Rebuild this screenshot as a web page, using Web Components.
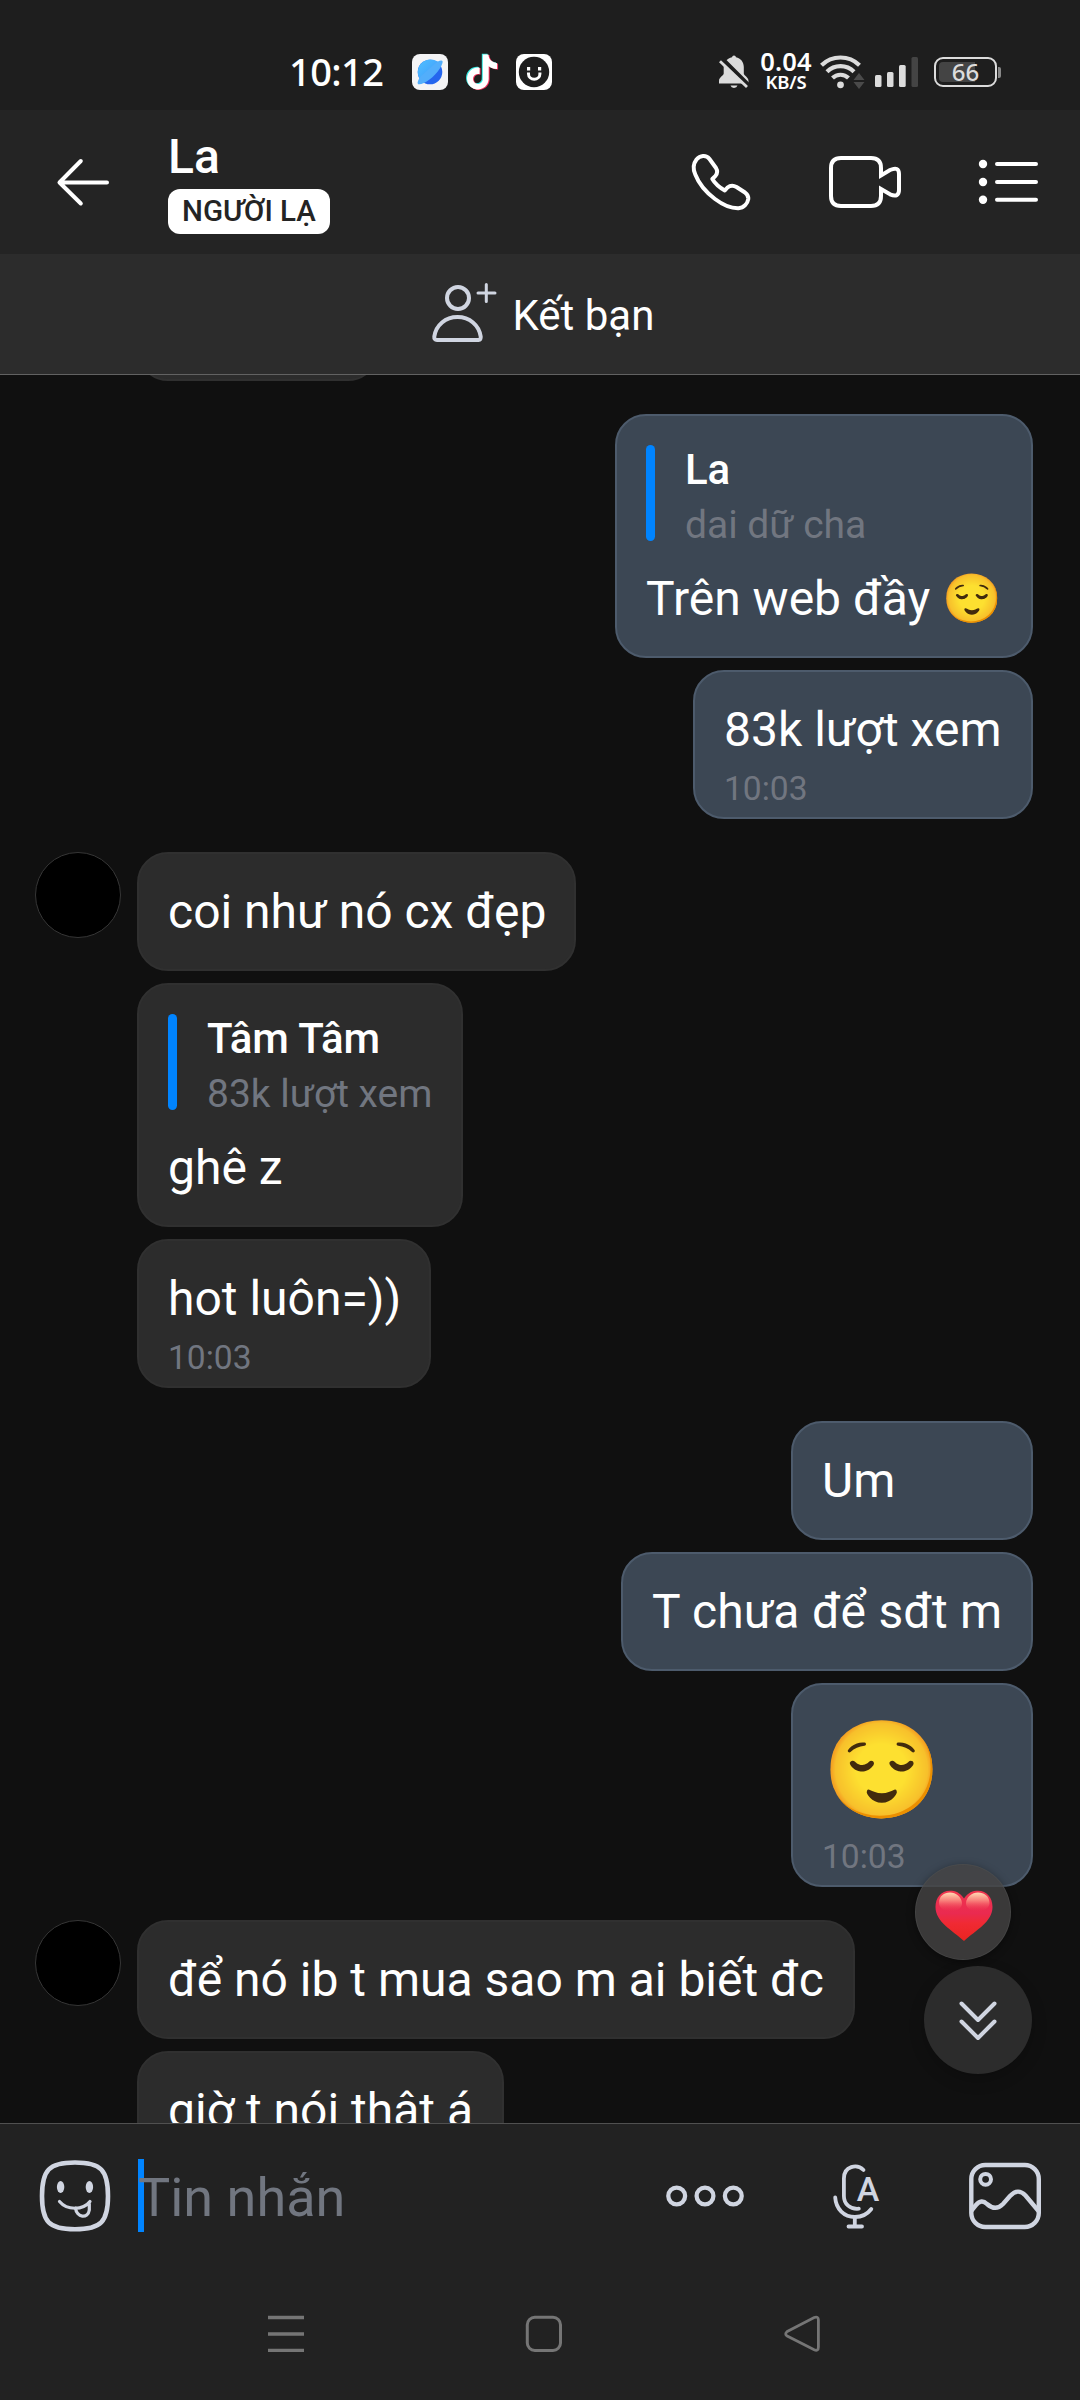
<!DOCTYPE html>
<html lang="vi">
<head>
<meta charset="utf-8">
<title>La</title>
<style>
html,body{margin:0;padding:0;background:#101010}
body{width:1080px;height:2400px;overflow:hidden;font-family:Roboto,"Noto Sans",sans-serif;color:#fff}
</style>
</head>
<body>
<chat-screen></chat-screen>
<script>
const note = 'M12.525.02c1.31-.02 2.61-.01 3.91-.02.08 1.53.63 3.09 1.75 4.17 1.12 1.11 2.7 1.62 4.24 1.79v4.03c-1.44-.05-2.89-.35-4.2-.97-.57-.26-1.1-.59-1.62-.93-.01 2.92.01 5.84-.02 8.75-.08 1.4-.54 2.79-1.35 3.94-1.31 1.92-3.58 3.17-5.91 3.21-1.43.08-2.86-.31-4.08-1.03-2.02-1.19-3.44-3.37-3.65-5.71-.02-.5-.03-1-.01-1.49.18-1.9 1.12-3.72 2.58-4.96 1.66-1.44 3.98-2.13 6.15-1.72.02 1.48-.04 2.96-.04 4.44-.99-.32-2.15-.23-3.02.37-.63.41-1.11 1.04-1.36 1.75-.21.51-.15 1.07-.14 1.61.24 1.64 1.82 3.02 3.5 2.87 1.12-.01 2.19-.66 2.77-1.61.19-.33.4-.67.41-1.06.1-1.79.06-3.57.07-5.36.01-4.03-.01-8.05.02-12.07z';

// name: [viewBox, markup]; icons are drawn at one unit per pixel
const ICONS = {
  planet: ['412 54 36 36', `<defs><linearGradient id="a" x1="0" y1="0" x2="1" y2="1"><stop offset="0" stop-color="#4fc0ff"/><stop offset="1" stop-color="#3f97fb"/></linearGradient></defs><rect x="412" y="54" width="36" height="36" rx="8" fill="#f4f4f5"/><circle cx="430" cy="72" r="12.3" fill="#2566ee"/><path d="M439.5 63.2A12.3 12.3 0 1 0 421.5 81Q433 76 439.5 63.2Z" fill="url(#a)"/><path d="M437 62Q444 58.5 442.3 63.5C440.500 70 431 80 424 83Q416 86.500 418 81Q419 78.500 421 76Z" fill="#52aefb"/>`],
  tiktok: ['464 53 36 38', `<g transform="translate(464.500 54) scale(1.44 1.46)"><path d="${note}" fill="#35e8e0" transform="translate(-.5 -.2)"/><path d="${note}" fill="#f5315b" transform="translate(.9 .7)"/><path d="${note}" fill="#fff" transform="translate(.2 .35)"/></g>`],
  smile: ['516 54 36 36', `<rect x="516" y="54" width="36" height="36" rx="8" fill="#fff"/><circle cx="534" cy="72" r="15.200" fill="#1e1e1e"/><path d="M528.5 72.500V74A5.700 5.300 0 0 0 539.900 74V72.500" stroke="#fff" stroke-width="3" fill="none"/><rect x="527" y="67" width="3.200" height="3.500" fill="#fff"/><rect x="538" y="67" width="3.200" height="3.500" fill="#fff"/>`],
  bell: ['718 54 32 36', `<path d="M734 55.500a2 2 0 0 1 2 1.700c4.600 1 7.800 4.600 7.800 9.800v6.500c0 2 4.700 3.500 4.700 7.500v2.500H719v-2.500c0-4 4.700-5.500 4.700-7.500V67c0-5.200 3.700-8.800 8.300-9.800a2 2 0 0 1 2-1.700Z" fill="#dcdcdc"/><path d="M730.500 85.500h7a3.600 3.200 0 0 1-7 0Z" fill="#dcdcdc"/><path d="M722.500 59L752 88.500" stroke="#1e1e1e" stroke-width="4"/><path d="M720 61.200L747 87" stroke="#dcdcdc" stroke-width="2.800"/>`],
  wifi: ['819 53 46 37', `<g fill="none" stroke="#dcdcdc" stroke-width="4.200"><path d="M821.500 65.200a27.300 27.300 0 0 1 38 0"/><path d="M827 71.800a19 19 0 0 1 27 0"/><path d="M832.500 78a11.500 11.500 0 0 1 16 0"/></g><circle cx="840.500" cy="84.800" r="3.400" fill="#dcdcdc"/><path d="M859 73l5.500 7h-11ZM859 89l5.500-7h-11Z" fill="#4a4a4a"/>`],
  signal: ['875 54 44 34', `<g fill="#dcdcdc"><rect x="875" y="75" width="6.500" height="12" rx="1.500"/><rect x="887" y="72" width="6.500" height="15" rx="1.500"/><rect x="899" y="65" width="6.700" height="22" rx="1.500"/></g><rect x="911.500" y="57" width="6.500" height="30" rx="1.500" fill="#444"/>`],
  back: ['54 157 58 50', `<path d="M107 182.500H59.500M80.800 161L59.500 182.500L80.800 203.500" stroke="#fff" stroke-width="4" stroke-linecap="round" stroke-linejoin="round" fill="none"/>`],
  phone: ['690 152 64 60', `<path d="M709.500 159C706 154.500 700 155.500 696.500 159.500C693 164 693.300 170 695.300 174.500C699 184 707 193 715 199C723 205 732 208.500 738.500 208.300C744 208 747.500 203.500 748.300 199C748.600 196 747.500 194.500 745 192.500L736.500 187C733 185 730 185.500 727.500 187.500L724.800 190.500C719.500 187.500 715 183.500 712.300 179L715.500 175.800C717.800 173 717.500 170.500 716 168Z" stroke="#fff" stroke-width="4" stroke-linejoin="round" fill="none"/>`],
  video: ['827 152 76 60', `<path d="M881 175.500V168Q881 158 871 158H841Q831 158 831 168V196Q831 206 841 206H871Q881 206 881 196V189L890 194.300Q899 198 899 190V174Q899 166 890 170Z" stroke="#fff" stroke-width="4" fill="none"/>`],
  list: ['977 152 63 60', `<g fill="#fff"><circle cx="983" cy="164" r="4.200"/><circle cx="983" cy="182" r="4.200"/><circle cx="983" cy="199.700" r="4.200"/></g><path d="M997 164H1036M997 182H1036M997 199.700H1036" stroke="#fff" stroke-width="4" stroke-linecap="round"/>`],
  addfriend: ['430 280 68 66', `<g fill="none" stroke="#d0d5e1" stroke-width="4" stroke-linejoin="round"><circle cx="458" cy="298" r="11"/><path d="M437 340H478.500Q481 340 480.700 336.500C479 325 469.500 317 457.500 317C445.500 317 436 325 434.300 336.500Q434 340 437 340Z"/><path d="M486.300 284.500V301.500M478 293H495" stroke-width="3" stroke-linecap="round"/></g>`],
  heart: ['934 1890 60 53', `<defs><linearGradient id="h" x1="0" y1="0" x2="0" y2="1"><stop offset="0" stop-color="#f0354f"/><stop offset=".45" stop-color="#ea2a50"/><stop offset=".65" stop-color="#f02a33"/><stop offset="1" stop-color="#ea2420"/></linearGradient><linearGradient id="s" x1="0" y1="0" x2="0" y2="1"><stop offset="0" stop-color="#ffdcb4"/><stop offset=".45" stop-color="#fb9083" stop-opacity=".8"/><stop offset="1" stop-color="#f03a50" stop-opacity="0"/></linearGradient></defs><path d="M964 1898.500C968 1892.500 973 1890.800 978 1890.800C987 1890.800 992.500 1898 992.500 1907C992.500 1922 976 1930 964 1941C952 1930 935.500 1922 935.500 1907C935.500 1898 941 1890.800 950 1890.800C955 1890.800 960 1892.500 964 1898.500Z" fill="url(#h)"/><path d="M939 1903C939 1896 944 1892.500 950 1892.500C956 1892.500 961.500 1897 962 1903C962.500 1914 939 1914 939 1903ZM966 1903C966.500 1897 972 1892.500 978 1892.500C984 1892.500 989.500 1896 989.500 1903C989.500 1914 965.500 1914 966 1903Z" fill="url(#s)"/>`],
  down: ['958 1998 40 46', `<path d="M961.500 2003.500L978 2020L994.500 2003.500M961.500 2021.500L978 2038L994.500 2021.500" stroke="#d0d5e1" stroke-width="4" stroke-linecap="round" stroke-linejoin="round" fill="none"/>`],
  sticker: ['39 2159 72 74', `<g fill="none" stroke="#d0d5e1" stroke-linecap="round"><path d="M75 2162.500C101 2162.500 108 2170 108 2196C108 2222 101 2229.300 75 2229.300C49 2229.300 42 2222 42 2196C42 2170 49 2162.500 75 2162.500Z" stroke-width="4.600"/><path d="M59.500 2201.500C67 2210.500 83 2210.500 90 2201.500" stroke-width="3.200"/><path d="M75.500 2208C76.500 2218 88 2219 89.300 2210V2204" stroke-width="3.200"/></g><ellipse cx="60.600" cy="2187" rx="3.700" ry="6" fill="#d0d5e1"/><ellipse cx="89.400" cy="2187" rx="3.700" ry="6" fill="#d0d5e1"/>`],
  more: ['665 2159 80 74', `<g fill="none" stroke="#d0d5e1" stroke-width="4.300"><circle cx="676.700" cy="2196" r="8.400"/><circle cx="705" cy="2196" r="8.400"/><circle cx="733.300" cy="2196" r="8.400"/></g>`],
  mic: ['831 2159 51 74', `<g fill="none" stroke="#d0d5e1" stroke-width="3.800" stroke-linecap="round" stroke-linejoin="round"><path d="M863.500 2170C857 2163.500 843.900 2166 843.900 2178.500V2196C843.900 2204 850 2209.500 858.800 2208.700"/><path d="M835.200 2197.500C836 2209 844 2217 855 2217C862 2217 867.500 2214 871.300 2209"/><path d="M854.800 2217V2226.500M848.500 2226.500H862"/></g><text x="868" y="2201.300" text-anchor="middle" font-family="Roboto" font-weight="500" font-size="34" fill="#d0d5e1">A</text>`],
  image: ['968 2159 74 74', `<g fill="none" stroke="#d0d5e1" stroke-width="4.400"><rect x="971.300" y="2165" width="67.500" height="62" rx="14"/><circle cx="985.600" cy="2179.300" r="5.400" stroke-width="4"/><path d="M971.500 2210.500L976 2205Q981.500 2198.500 987 2204Q995.500 2211.500 1003 2204L1010 2196Q1018 2187.500 1025.500 2195.500L1038.500 2211"/></g>`],
  recents: ['266 2312 40 44', `<path d="M268 2317.500H304M268 2334H304M268 2350.300H304" stroke="#757575" stroke-width="3.300"/>`],
  home: ['524 2312 40 44', `<rect x="527.300" y="2317.300" width="33.200" height="33.200" rx="7.500" fill="none" stroke="#757575" stroke-width="3"/>`],
  goback: ['781.300 2312 40 44', `<path d="M786.500 2331.500L813.500 2317.500Q817.700 2316 817.700 2320V2347Q817.700 2351.500 813.500 2349.800L786.500 2336Q783.500 2334 786.500 2331.500Z" fill="none" stroke="#757575" stroke-width="2.800"/>`]
};

class Part extends HTMLElement {
  constructor() {
    super();
    this.attachShadow({ mode: 'open' });
  }
  connectedCallback() {
    this.shadowRoot.innerHTML = this.view();
  }
}

customElements.define('ui-icon', class extends Part {
  view() {
    const [box, body] = ICONS[this.getAttribute('name')];
    const [, , w, h] = box.split(' ');
    return `<style>:host{display:block;flex:none}svg{display:block;overflow:visible}</style><svg width="${w}" height="${h}" viewBox="${box}">${body}</svg>`;
  }
});

customElements.define('status-bar', class extends Part {
  view() {
    return `<style>
:host{display:flex;align-items:flex-start;height:110px;box-sizing:border-box;padding:54px 79px 0 289px;background:#1e1e1e}
.t{font:500 38px/38px "Noto Sans",sans-serif;width:123px;margin-top:-2px;letter-spacing:-.6px;white-space:nowrap}
.n{width:60px;margin:-2px 3px 0 6px;text-align:center;white-space:nowrap}
.n b{display:block;font:600 25.500px/19px "Noto Sans",sans-serif;letter-spacing:.2px}
.n i{display:block;margin-top:2px;font:600 18.500px/17px "Noto Sans",sans-serif;letter-spacing:-.2px}
.g{flex:1}
ui-icon+ui-icon{margin-left:16px}
.bat{display:flex;align-items:center;margin:3px 0 0 15px}
.cell{box-sizing:border-box;width:63px;height:30px;border:2.500px solid #dcdcdc;border-radius:9px;padding:2.500px;font:500 24px/20px "Noto Sans",sans-serif;text-align:center;color:#dcdcdc}
.cell div{height:20px;border-radius:4px;background:linear-gradient(90deg,#444 66%,transparent 66%);line-height:20px}
.nub{width:3px;height:11px;margin-left:1px;border-radius:0 2px 2px 0;background:#888}
</style>
<div class="t">10:12</div>
<ui-icon name="planet"></ui-icon><ui-icon name="tiktok" style="margin-top:-1px"></ui-icon><ui-icon name="smile"></ui-icon>
<div class="g"></div>
<ui-icon name="bell"></ui-icon>
<div class="n"><b>0.04</b><i>KB/S</i></div>
<ui-icon name="wifi" style="margin-top:-1px"></ui-icon><ui-icon name="signal" style="margin-left:10px"></ui-icon>
<div class="bat"><div class="cell"><div>66</div></div><div class="nub"></div></div>`;
  }
});

customElements.define('chat-header', class extends Part {
  view() {
    return `<style>
:host{display:flex;align-items:center;height:144px;box-sizing:border-box;padding:0 40px 0 54px;background:#242424}
.who{flex:1;margin-left:56px;display:flex;flex-direction:column;align-items:flex-start;margin-top:-3px}
.name{font-weight:500;font-size:48px;line-height:57px}
.tag{box-sizing:border-box;width:162px;height:45px;margin-top:4px;border-radius:12px;background:#fff;color:#242424;font-weight:500;font-size:29.500px;line-height:45px;text-align:center;white-space:nowrap}
.acts{display:flex;gap:74px}
</style>
<ui-icon name="back"></ui-icon>
<div class="who"><div class="name"><slot name="name"></slot></div><div class="tag"><slot name="tag"></slot></div></div>
<div class="acts"><ui-icon name="phone" style="margin-right:-1px"></ui-icon><ui-icon name="video"></ui-icon><ui-icon name="list"></ui-icon></div>`;
  }
});

customElements.define('friend-bar', class extends Part {
  view() {
    return `<style>
:host{display:flex;align-items:center;height:121px;box-sizing:border-box;border-bottom:1px solid #626262;padding:0 0 0 430px;background:#2c2c2c;font-size:42px;line-height:49px}
ui-icon{margin-top:-2px}
span{margin:2px 0 0 14.500px;white-space:nowrap}
</style><ui-icon name="addfriend"></ui-icon><span><slot></slot></span>`;
  }
});

customElements.define('quote-block', class extends Part {
  view() {
    return `<style>
:host{display:flex;height:96px;margin-bottom:29px;gap:30px}
.bar{width:9px;border-radius:5px;background:#0084ff}
.name{font-weight:500;font-size:42px;line-height:49px;letter-spacing:-.1px}
.text{margin-top:8px;font-size:39px;line-height:46px;color:#717680}
</style><div class="bar"></div><div><div class="name">${this.getAttribute('name')}</div><div class="text"><slot></slot></div></div>`;
  }
});

customElements.define('chat-bubble', class extends Part {
  view() {
    const time = this.getAttribute('time');
    return `<style>
:host{display:block;box-sizing:border-box;width:${this.getAttribute('w') || 242}px;min-height:119px;padding:29px 0 ${time ? 9 : 29}px 29px;border:2px solid #303030;border-radius:31px;background:#2c2c2c;font-size:48px;line-height:57px;white-space:nowrap}
:host([mine]){background:#3c4754;border-color:#4d5b6c}
:host([big]) .body{font-size:96px;line-height:112px;height:112px}
.time{margin-top:11px;font-size:33.600px;line-height:40px;height:39px;color:#717680}
</style><slot name="quote"></slot><div class="body"><slot></slot></div>${time ? `<div class="time">${time}</div>` : ''}`;
  }
});

customElements.define('message-group', class extends Part {
  view() {
    return `<style>
:host{display:flex;padding:0 47px 0 35px}
.av{flex:none;width:86px;height:86px;margin-right:16px;box-sizing:border-box;border-radius:50%}
.av.on{background:#000;border:1px solid #363636}
.col{flex:1;display:flex;flex-direction:column;gap:12px;align-items:flex-start}
:host([mine]) .col{align-items:flex-end}
</style><div class="av ${this.hasAttribute('avatar') ? 'on' : ''}"></div><div class="col"><slot></slot></div>`;
  }
});

customElements.define('chat-log', class extends Part {
  view() {
    return `<style>
:host{display:flex;flex-direction:column;gap:33px;height:1748px;overflow:hidden;position:relative;background:#101010}
.heart,.down{position:absolute;display:flex;align-items:center;justify-content:center;border-radius:50%}
.heart{left:915px;top:1489px;width:96px;height:96px;box-sizing:border-box;border:1.500px solid rgba(80,80,80,.5);background:rgba(69,67,67,.8);box-shadow:0 2px 8px rgba(0,0,0,.4)}
.heart ui-icon{margin:8px 0 0 2px}
.down{left:924px;top:1591px;width:108px;height:108px;background:#2c2c2c;box-shadow:0 6px 16px rgba(0,0,0,.2)}
.down ui-icon{margin-top:2px}
</style><slot></slot><div class="heart"><ui-icon name="heart"></ui-icon></div><div class="down"><ui-icon name="down"></ui-icon></div>`;
  }
});

customElements.define('message-input', class extends Part {
  view() {
    return `<style>
:host{display:flex;align-items:center;height:147px;box-sizing:border-box;border-top:1px solid #505050;padding:0 38px 2px 39px;background:#222}
.field{flex:1;display:flex;align-items:center;height:73px;margin:-1px 0 0 27px;font-size:54px;line-height:73px;color:#717680}
.caret{width:6px;height:73px;margin-right:-6px;background:#0084ff}
.ph{position:relative;top:1.500px}
</style>
<ui-icon name="sticker"></ui-icon>
<div class="field"><div class="caret"></div><span class="ph"><slot></slot></span></div>
<ui-icon name="more"></ui-icon><ui-icon name="mic" style="margin-left:86px"></ui-icon><ui-icon name="image" style="margin-left:86px"></ui-icon>`;
  }
});

customElements.define('nav-bar', class extends Part {
  view() {
    return `<style>
:host{display:flex;align-items:center;justify-content:space-between;height:130px;box-sizing:border-box;padding:0 258px 2px 266px;background:#222}
</style><ui-icon name="recents"></ui-icon><ui-icon name="home"></ui-icon><ui-icon name="goback"></ui-icon>`;
  }
});

customElements.define('chat-screen', class extends Part {
  view() {
    return `<style>:host{display:flex;flex-direction:column;width:1080px;height:2400px;overflow:hidden}</style>
<status-bar></status-bar>
<chat-header><span slot="name">La</span><span slot="tag">NGƯỜI LẠ</span></chat-header>
<friend-bar>Kết bạn</friend-bar>
<chat-log>
<message-group style="margin-top:-113px"><chat-bubble></chat-bubble></message-group>
<message-group mine>
<chat-bubble mine w="418"><quote-block slot="quote" name="La">dai dữ cha</quote-block>Trên web đầy 😌</chat-bubble>
<chat-bubble mine w="340" time="10:03">83k lượt xem</chat-bubble>
</message-group>
<message-group avatar>
<chat-bubble w="439">coi như nó cx đẹp</chat-bubble>
<chat-bubble w="326"><quote-block slot="quote" name="Tâm Tâm">83k lượt xem</quote-block>ghê z</chat-bubble>
<chat-bubble w="294" time="10:03">hot luôn=))</chat-bubble>
</message-group>
<message-group mine>
<chat-bubble mine>Um</chat-bubble>
<chat-bubble mine w="412" style="word-spacing:.5px">T chưa để sđt m</chat-bubble>
<chat-bubble mine big time="10:03">😌</chat-bubble>
</message-group>
<message-group avatar>
<chat-bubble w="718">để nó ib t mua sao m ai biết đc</chat-bubble>
<chat-bubble w="367">giờ t nói thật á</chat-bubble>
</message-group>
</chat-log>
<message-input>Tin nhắn</message-input>
<nav-bar></nav-bar>`;
  }
});
</script>
</body>
</html>
